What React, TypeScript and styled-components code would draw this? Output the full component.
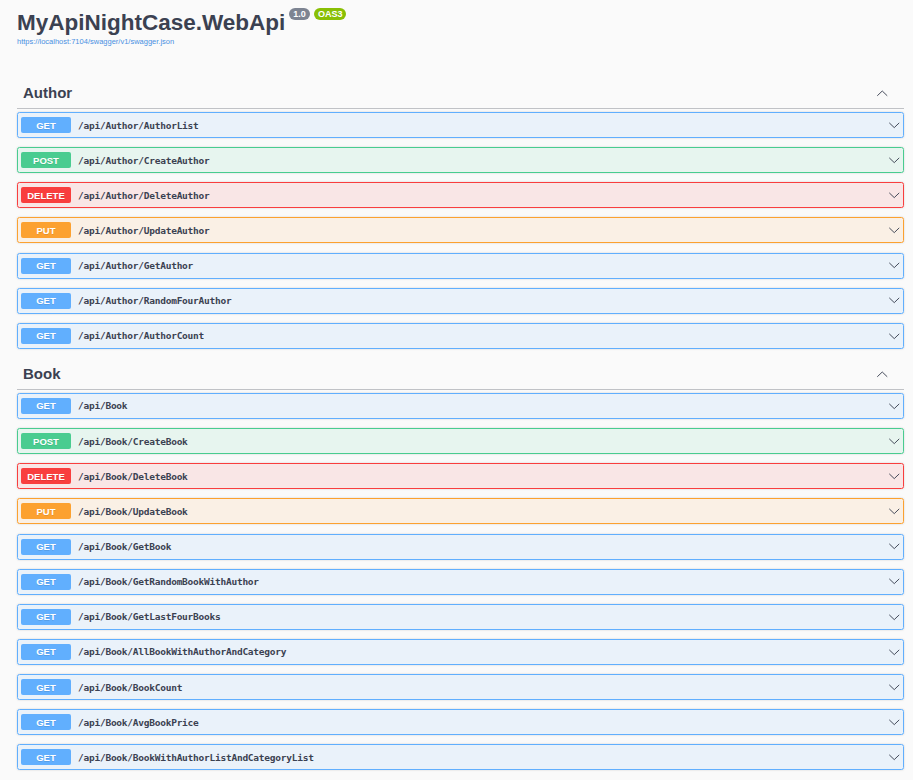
import React from "react";
import styled, { createGlobalStyle } from "styled-components";

const GlobalStyle = createGlobalStyle`
  html, body { margin: 0; padding: 0; background: #fafafa; }
  body { font-family: "Liberation Sans", Arial, sans-serif; color: #3b4151; }
`;

type Method = "GET" | "POST" | "DELETE" | "PUT";

const palette: Record<Method, { main: string; bg: string }> = {
  GET: { main: "#61affe", bg: "rgba(97,175,254,.1)" },
  POST: { main: "#49cc90", bg: "rgba(73,204,144,.1)" },
  DELETE: { main: "#f93e3e", bg: "rgba(249,62,62,.1)" },
  PUT: { main: "#fca130", bg: "rgba(252,161,48,.1)" },
};

const Page = styled.div`
  padding: 10px 9px 20px 17px;
`;

const Info = styled.div`
  display: flex;
  flex-direction: column;
  margin-bottom: 32px;
`;

const TitleRow = styled.div`
  display: flex;
  align-items: flex-start;
`;

const Title = styled.h2`
  margin: 0;
  font-size: 22.5px;
  line-height: 26px;
  font-weight: 700;
  color: #3b4151;
`;

const Pill = styled.span<{ $bg: string }>`
  display: inline-flex;
  align-items: center;
  margin: -2px 0 0 4px;
  padding: 0 4px;
  height: 12px;
  border-radius: 20px;
  background: ${(p) => p.$bg};
  color: #fff;
  font-size: 9px;
  font-weight: 700;
  line-height: 12px;
`;

const UrlLink = styled.a`
  margin-top: 1px;
  font-size: 7.5px;
  line-height: 9px;
  color: #4990e2;
  text-decoration: none;
`;

const Section = styled.section`
  display: flex;
  flex-direction: column;
  margin-bottom: 1px;
`;

const TagHeader = styled.div`
  display: flex;
  align-items: center;
  justify-content: space-between;
  height: 18px;
  padding: 6px 16px 6px 6px;
  border-bottom: 1px solid rgba(59, 65, 81, 0.3);
  margin-bottom: 3px;
`;

const TagName = styled.h3`
  margin: 0;
  font-size: 15px;
  font-weight: 700;
  line-height: 18px;
  color: #3b4151;
`;

const Op = styled.div<{ $m: Method }>`
  display: flex;
  align-items: center;
  height: 18px;
  padding: 3px;
  margin-bottom: 9.15px;
  border: 1px solid ${(p) => palette[p.$m].main};
  background: ${(p) => palette[p.$m].bg};
  border-radius: 2.5px;
  box-shadow: 0 0 2px rgba(0, 0, 0, 0.19);
`;

const MethodBadge = styled.span<{ $m: Method }>`
  display: flex;
  align-items: center;
  justify-content: center;
  width: 50px;
  height: 16px;
  border-radius: 2px;
  background: ${(p) => palette[p.$m].main};
  color: #fff;
  font-size: 9.5px;
  font-weight: 700;
  text-shadow: 0 1px 0 rgba(0, 0, 0, 0.1);
`;

const Path = styled.span`
  flex: 1;
  padding: 0 7px;
  font-family: "DejaVu Sans Mono", "Liberation Mono", monospace;
  font-size: 9.5px;
  font-weight: 700;
  letter-spacing: -0.24px;
  color: #3b4151;
`;

const ArrowBox = styled.span`
  display: flex;
  align-items: center;
  justify-content: center;
  width: 12.5px;
  height: 12.5px;
`;

const Chevron = ({ up }: { up?: boolean }) => (
  <ArrowBox>
    <svg width="12.5" height="12.5" viewBox="0 0 20 20">
      <polyline
        points={up ? "2.5,13.6 10,6.4 17.5,13.6" : "2.5,6.6 10,13.8 17.5,6.6"}
        fill="none"
        stroke="#3b4151"
        strokeWidth="1.5"
        strokeLinecap="round"
        strokeLinejoin="round"
      />
    </svg>
  </ArrowBox>
);

type Row = [Method, string];

const sections: { name: string; ops: Row[] }[] = [
  {
    name: "Author",
    ops: [
      ["GET", "/api/Author/AuthorList"],
      ["POST", "/api/Author/CreateAuthor"],
      ["DELETE", "/api/Author/DeleteAuthor"],
      ["PUT", "/api/Author/UpdateAuthor"],
      ["GET", "/api/Author/GetAuthor"],
      ["GET", "/api/Author/RandomFourAuthor"],
      ["GET", "/api/Author/AuthorCount"],
    ],
  },
  {
    name: "Book",
    ops: [
      ["GET", "/api/Book"],
      ["POST", "/api/Book/CreateBook"],
      ["DELETE", "/api/Book/DeleteBook"],
      ["PUT", "/api/Book/UpdateBook"],
      ["GET", "/api/Book/GetBook"],
      ["GET", "/api/Book/GetRandomBookWithAuthor"],
      ["GET", "/api/Book/GetLastFourBooks"],
      ["GET", "/api/Book/AllBookWithAuthorAndCategory"],
      ["GET", "/api/Book/BookCount"],
      ["GET", "/api/Book/AvgBookPrice"],
      ["GET", "/api/Book/BookWithAuthorListAndCategoryList"],
    ],
  },
];

export default function App() {
  return (
    <>
      <GlobalStyle />
      <Page>
        <Info>
          <TitleRow>
            <Title>MyApiNightCase.WebApi</Title>
            <Pill $bg="#7d8492">1.0</Pill>
            <Pill $bg="#89bf04">OAS3</Pill>
          </TitleRow>
          <UrlLink href="#">https://localhost:7104/swagger/v1/swagger.json</UrlLink>
        </Info>
        {sections.map((s) => (
          <Section key={s.name}>
            <TagHeader>
              <TagName>{s.name}</TagName>
              <Chevron up />
            </TagHeader>
            {s.ops.map(([m, p]) => (
              <Op key={p + m} $m={m}>
                <MethodBadge $m={m}>{m}</MethodBadge>
                <Path>{p}</Path>
                <Chevron />
              </Op>
            ))}
          </Section>
        ))}
      </Page>
    </>
  );
}
